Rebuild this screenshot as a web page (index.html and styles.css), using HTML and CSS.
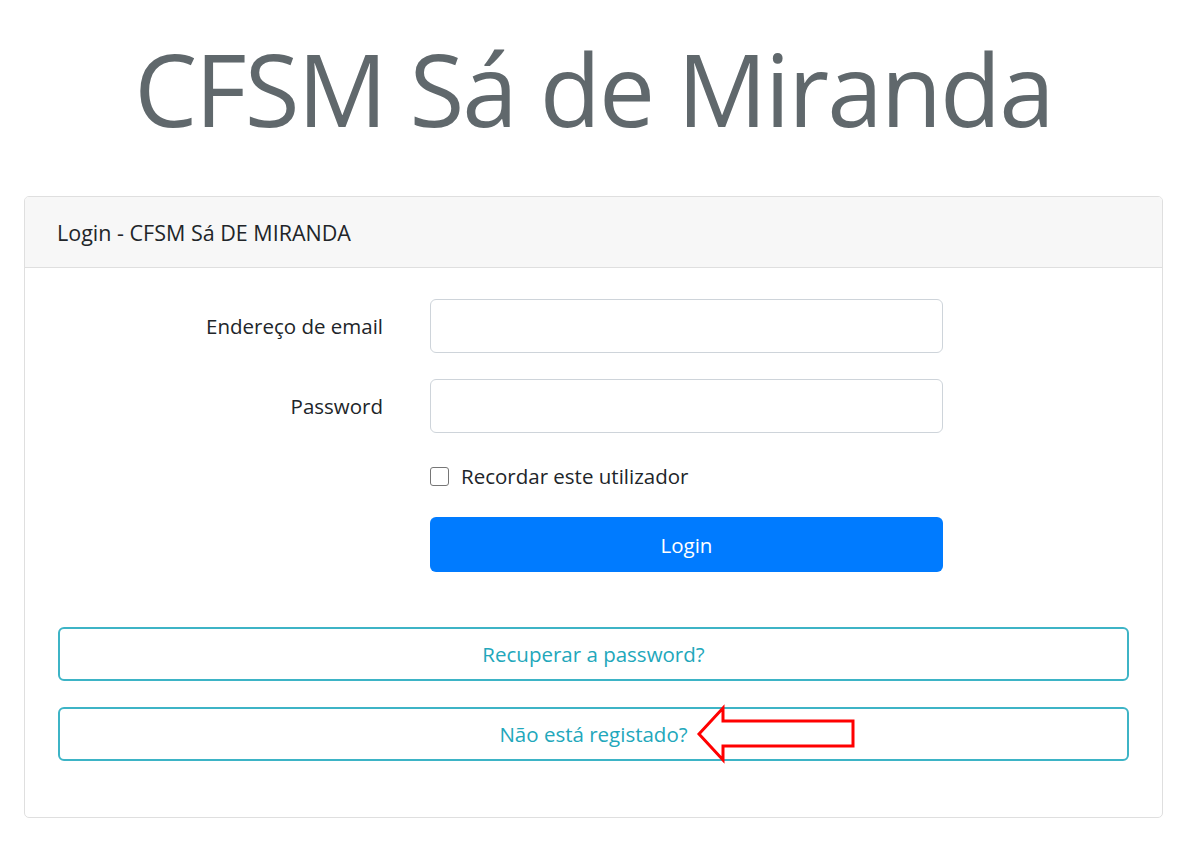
FILE: index.html
```html
<!DOCTYPE html>
<html lang="pt">
<head>
    <meta charset="UTF-8">
    <meta name="viewport" content="width=device-width, initial-scale=1.0">
    <title>CFSM Sá de Miranda - Login</title>
    <link rel="stylesheet" href="styles.css">
</head>
<body>

<div class="page">
    <h1 class="brand">CFSM Sá de Miranda</h1>

    <div class="card">
        <div class="card-header">Login - CFSM Sá DE MIRANDA</div>

        <div class="card-body">
            <form class="login-form">
                <div class="form-row">
                    <label for="email">Endereço de email</label>
                    <input type="email" id="email">
                </div>
                <div class="form-row">
                    <label for="password">Password</label>
                    <input type="password" id="password">
                </div>
                <div class="form-row check-row">
                    <span></span>
                    <label class="check"><span class="box"></span>Recordar este utilizador</label>
                </div>
                <div class="form-row submit-row">
                    <span></span>
                    <button type="submit" class="btn-primary">Login</button>
                </div>
            </form>

            <div class="links">
                <a href="#" class="btn-outline">Recuperar a password?</a>
                <a href="#" class="btn-outline">
                    <span class="arrow-anchor">Não está registado?
                        <svg class="arrow" width="162" height="60" viewBox="0 0 162 60">
                            <path d="M3 30 L27 4 L27 17 L157 17 L157 42 L27 42 L27 56 Z" fill="#fff" stroke="#ff0000" stroke-width="3"/>
                        </svg>
                    </span>
                </a>
            </div>
        </div>
    </div>
</div>

</body>
</html>
```

FILE: styles.css
```css
body {
    margin: 0;
    background: #fff;
    font-family: "Open Sans", "Noto Sans", Arial, sans-serif;
    color: #212529;
}
.page {
    width: 1139px;
    margin: 0 auto 0 24px;
}
.brand {
    margin: 0;
    height: 196px;
    box-sizing: border-box;
    padding-top: 26px;
    text-align: center;
    font-size: 100px;
    letter-spacing: -2px;
    font-weight: 400;
    line-height: 125px;
    color: #60686c;
}
.card {
    border: 1px solid #dfdfdf;
    border-radius: 5px;
    overflow: hidden;
}
.card-header {
    background: #f7f7f7;
    border-bottom: 1px solid #dfdfdf;
    height: 71px;
    box-sizing: border-box;
    padding: 0 32px;
    display: flex;
    align-items: center;
    font-size: 21.5px;
}
.card-body {
    padding: 31px 33px 56px;
}
.form-row {
    display: grid;
    grid-template-columns: 325px 513px;
    column-gap: 47px;
    align-items: center;
    margin-bottom: 26px;
}
.form-row > label {
    text-align: right;
    font-size: 20.5px;
}
input {
    height: 54px;
    border: 1px solid #ced4da;
    border-radius: 6px;
    box-sizing: border-box;
    width: 100%;
    font-size: 20px;
}
.check-row {
    padding-top: 3px;
    margin-bottom: 27px;
}
.form-row .check {
    text-align: left;
    display: flex;
    align-items: center;
    gap: 12px;
    font-size: 20.5px;
}
.box {
    width: 17px;
    height: 17px;
    border: 1.5px solid #767676;
    border-radius: 3px;
}
.submit-row {
    margin-bottom: 55px;
}
.btn-primary {
    height: 55px;
    width: 100%;
    border: none;
    border-radius: 6px;
    background: #007bff;
    color: #fff;
    font-family: inherit;
    font-size: 20.5px;
}
.links {
    display: flex;
    flex-direction: column;
    gap: 26px;
}
.btn-outline {
    display: flex;
    justify-content: center;
    align-items: center;
    height: 54px;
    box-sizing: border-box;
    border: 2px solid #3db4c6;
    border-radius: 6px;
    color: #22a7bb;
    text-decoration: none;
    font-size: 20.5px;
}
.arrow-anchor {
    position: relative;
}
.arrow {
    position: absolute;
    left: 100%;
    top: -16px;
    margin-left: 8px;
}
```
